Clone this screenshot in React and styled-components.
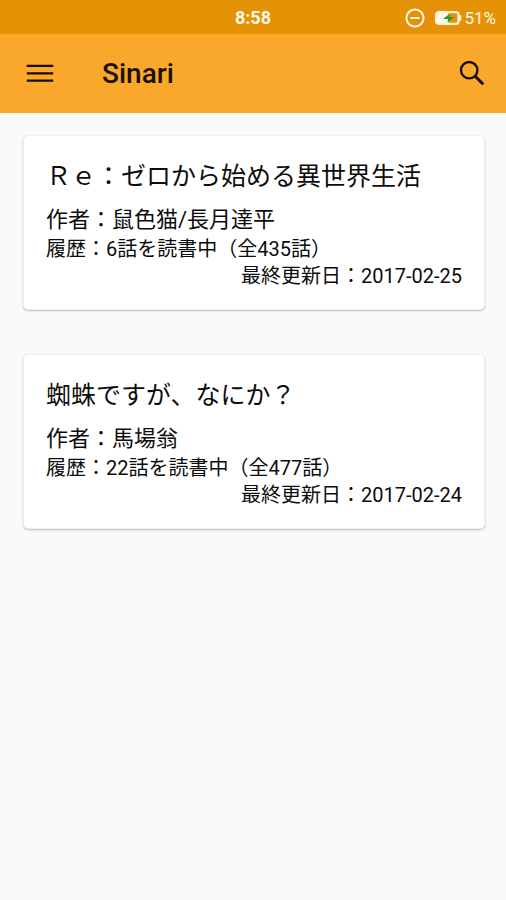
import React from "react";
import styled, { createGlobalStyle } from "styled-components";

const GlobalStyle = createGlobalStyle`
  *, *::before, *::after { box-sizing: border-box; }
  body {
    margin: 0;
    background: #fafafa;
    color: #0c0c0c;
    font-family: Roboto, "Noto Sans CJK JP", sans-serif;
  }
`;

const StatusBar = styled.div`
  display: grid;
  grid-template-columns: 1fr auto 1fr;
  align-items: center;
  height: 34px;
  padding: 2px 10px 0;
  background: #e69207;
  color: #fff8ea;
`;

const Clock = styled.time`
  grid-column: 2;
  font-size: 18px;
  font-weight: 700;
  line-height: 20px;
`;

const StatusIcons = styled.div`
  display: flex;
  justify-content: flex-end;
  align-items: center;
`;

const QuietIcon = styled.svg`
  width: 20px;
  height: 20px;
  margin-right: 9px;
`;

const BatteryIcon = styled.svg`
  width: 28px;
  height: 16px;
  margin-right: 2px;
`;

const BatteryLevel = styled.span`
  font-size: 17px;
  line-height: 20px;
`;

const AppBar = styled.header`
  display: flex;
  align-items: center;
  height: 79px;
  padding: 0 16px 0 22px;
  background: #faa82b;
`;

const IconButton = styled.button`
  display: flex;
  align-items: center;
  justify-content: center;
  width: 36px;
  height: 36px;
  padding: 0;
  border: 0;
  background: none;
  color: #140d02;
  cursor: pointer;
`;

const AppTitle = styled.h1`
  flex: 1;
  margin: 0 0 0 44px;
  font-size: 28px;
  font-weight: 500;
  line-height: 32px;
  color: #1a1103;
`;

const NovelList = styled.main`
  display: flex;
  flex-direction: column;
  gap: 44px;
  padding: 22px 21px 22px 23px;
`;

const NovelCard = styled.article`
  display: flex;
  flex-direction: column;
  padding: 24px 22px 19px;
  border: 1px solid #f0f0f0;
  border-radius: 5px;
  background: #fff;
  box-shadow: 0 1px 2px rgba(0, 0, 0, 0.26);
`;

const NovelTitle = styled.h2`
  margin: 0 0 10px;
  font-size: 25px;
  font-weight: 400;
  line-height: 34px;
`;

const Author = styled.p`
  margin: 0;
  font-size: 22px;
  line-height: 32px;
`;

const Detail = styled.p`
  margin: 0;
  font-size: 20px;
  line-height: 27px;
  text-align: ${({ $align }) => $align || "left"};
`;

const novels = [
  {
    title: "Ｒｅ：ゼロから始める異世界生活",
    author: "鼠色猫/長月達平",
    read: 6,
    total: 435,
    updated: "2017-02-25",
  },
  {
    title: "蜘蛛ですが、なにか？",
    author: "馬場翁",
    read: 22,
    total: 477,
    updated: "2017-02-24",
  },
];

export default function App() {
  return (
    <>
      <GlobalStyle />
      <StatusBar>
        <Clock>8:58</Clock>
        <StatusIcons>
          <QuietIcon viewBox="0 0 20 20" fill="none" stroke="currentColor" strokeWidth="2" aria-hidden="true">
            <circle cx="10" cy="10" r="8.6" />
            <path d="M5.5 10h9" />
          </QuietIcon>
          <BatteryIcon viewBox="0 0 28 16" aria-hidden="true">
            <rect x="2" y="2.2" width="22.5" height="11.6" rx="2.5" fill="none" stroke="#fff0dc" strokeWidth="2.2" />
            <path d="M25 5h.8a1.4 1.4 0 0 1 1.4 1.4v3.2a1.4 1.4 0 0 1-1.4 1.4H25z" fill="#fff0dc" />
            <path d="M3 3h11.5v10H3z" fill="#fff8ea" />
            <path d="M16 3.5 9 9h5l-.5 3.5 6.5-5.5h-5z" fill="#16a51c" />
          </BatteryIcon>
          <BatteryLevel>51%</BatteryLevel>
        </StatusIcons>
      </StatusBar>
      <AppBar>
        <IconButton type="button" aria-label="メニュー">
          <svg width="28" height="20" viewBox="0 0 28 20" fill="none" stroke="currentColor" strokeWidth="2.3" aria-hidden="true">
            <path d="M.8 1.9h26.4M.8 9.3h26.4M.8 16.7h26.4" />
          </svg>
        </IconButton>
        <AppTitle>Sinari</AppTitle>
        <IconButton type="button" aria-label="検索">
          <svg width="26" height="26" viewBox="0 0 26 26" fill="none" stroke="currentColor" aria-hidden="true">
            <circle cx="10.2" cy="9.2" r="8.2" strokeWidth="2.3" />
            <path d="M16.2 15.2l8 8" strokeWidth="3" />
          </svg>
        </IconButton>
      </AppBar>
      <NovelList>
        {novels.map((novel) => (
          <NovelCard key={novel.title}>
            <NovelTitle>{novel.title}</NovelTitle>
            <Author>作者：{novel.author}</Author>
            <Detail>{`履歴：${novel.read}話を読書中（全${novel.total}話）`}</Detail>
            <Detail $align="right">{`最終更新日：${novel.updated}`}</Detail>
          </NovelCard>
        ))}
      </NovelList>
    </>
  );
}
